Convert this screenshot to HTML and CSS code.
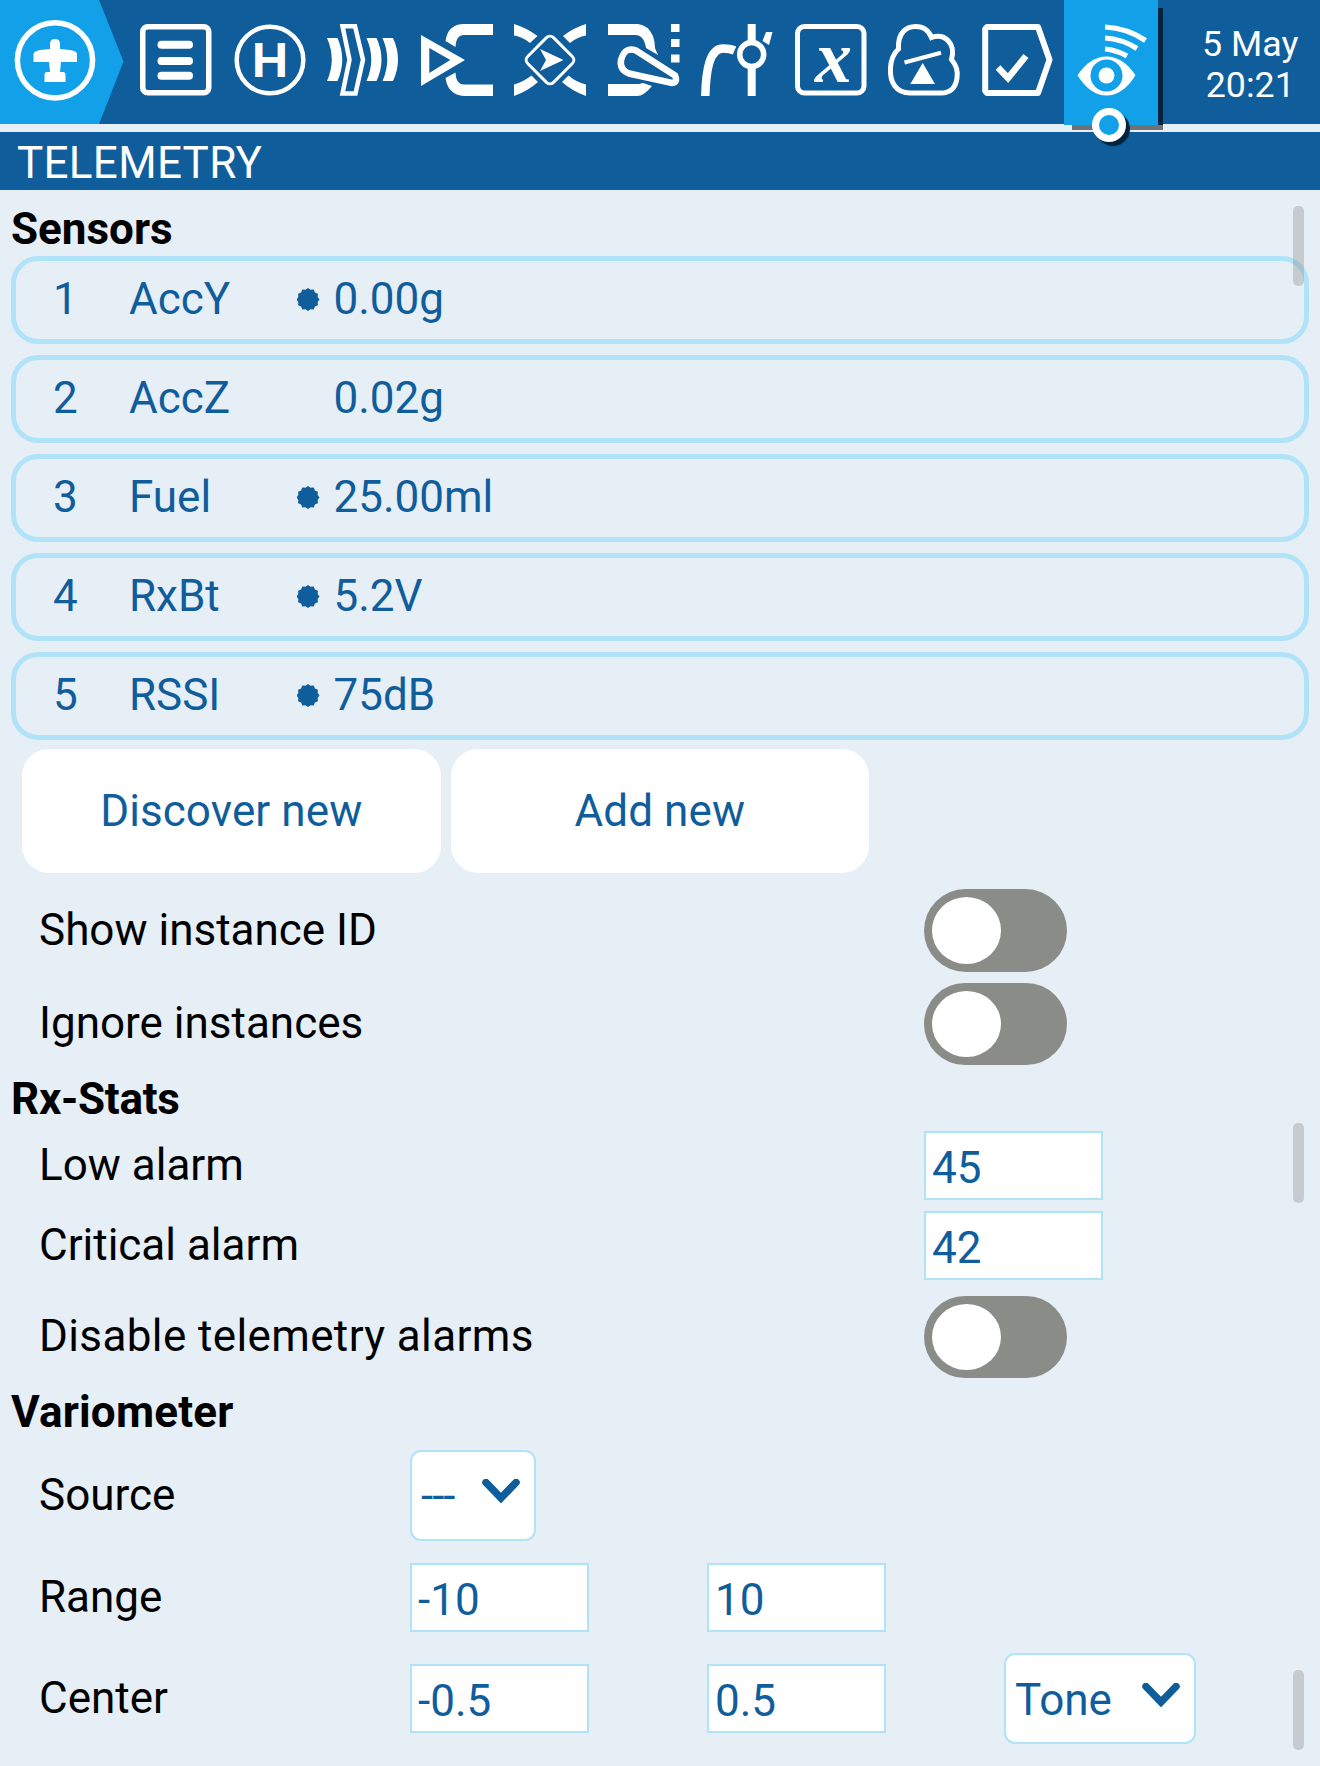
FILE: index.html
```html
<!DOCTYPE html>
<html lang="en">
<head>
<meta charset="utf-8">
<title>Telemetry</title>
<link rel="stylesheet" href="styles.css">
</head>
<body>
<header class="topbar">
  <div class="home">
    <svg width="124" height="124" viewBox="0 0 124 124">
      <path class="accent" d="M0 0H99L123.500 61.500L99 124H0Z"/>
      <circle class="line" cx="55" cy="60.300" r="37.600" stroke-width="5.500"/>
      <path class="solid" d="M50 44Q50 39 55 39Q60 39 60 44V49L70 50Q77 51 77 54V62H61L60 72H63Q65.500 72 65.500 75V82H44.500V75Q44.500 72 47 72H50L49 62H33.500V54Q34 51 40 50L50 49Z"/>
    </svg>
  </div>
  <nav class="tabs">
    <a class="tab"><svg class="icon" viewBox="0 0 72 72"><rect class="line" x="2.750" y="2.750" width="66" height="66" rx="5" stroke-width="5.500"/><path class="line" d="M21.500 20.700H49M21.500 37H49M21.500 51.700H49" stroke-width="8" stroke-linecap="round"/></svg></a>
    <a class="tab"><svg class="icon" viewBox="0 0 72 72"><circle class="line" cx="36" cy="36" r="33.300" stroke-width="4.500"/><text class="letter-h" x="18" y="53" textLength="36" lengthAdjust="spacingAndGlyphs">H</text></svg></a>
    <a class="tab"><svg class="icon" viewBox="0 0 72 72"><path class="solid" d="M0 14H10.500Q20 35.500 10.500 57H0Q9.500 35.500 0 14ZM39.500 14H49.500Q59.500 35.500 49.500 57H39.500Q49 35.500 39.500 14ZM55.500 14H66Q76 35.500 66 57H55.500Q65 35.500 55.500 14Z"/><path class="line" d="M15.500 2.200H28L36 35.700L28.500 69.500H15.500L22.500 35.700Z" stroke-width="4.500"/></svg></a>
    <a class="tab"><svg class="icon" viewBox="0 0 72 72"><path class="solid" fill-rule="evenodd" d="M0 11L44 36L0 62ZM8.300 24V49L29.300 36Z"/><path class="solid" d="M72 0H43Q27 0 24.500 17L34.500 23Q35 11 43 11H72ZM72 72H43Q27 71 24.500 54L34.500 48.500Q35 60.500 43 60.500H72Z"/></svg></a>
    <a class="tab"><svg class="icon" viewBox="0 0 72 72"><rect class="line" x="17.700" y="17.700" width="36.600" height="36.600" rx="5" stroke-width="3" transform="rotate(45 36 36)"/><path class="solid" d="M26 25L49.500 36L26 47L32 36Z"/><path class="solid" d="M0 0Q13 4 23.500 12L16 19Q9 13 0 11.500ZM72 0Q59 4 49 12L56 19Q63 13 72 11.500ZM0 72Q14 67 24 58L17.500 51.500Q10 57.500 0 60.500ZM72 72Q58 67 48 58L54.500 51.500Q62 58 72 60.500Z"/></svg></a>
    <a class="tab"><svg class="icon" viewBox="0 0 72 72"><path class="solid" d="M0 0H30Q40 1 45 12Q47 18 47 24L50 31L38 24Q36 11 27 11H0ZM0 60H31L35 59L44 62Q36 72 29 72H0Z"/><path class="line" d="M28 26.500L67 51.500Q70 58.500 64 59L21 49.500Q11.500 46 13 36Q17 22 28 26.500Z" stroke-width="6.500"/><path class="solid" d="M63 0H71.500V8H63ZM63 15H71.500V23H63ZM63 30.500H71.500V38.500H63Z"/></svg></a>
    <a class="tab"><svg class="icon" viewBox="0 0 72 72"><path class="line" d="M4.300 72C5 45 9 24.500 22 24.500Q29 24.500 33.500 26.500" stroke-width="8.500"/><path class="line" d="M50.700 0V72" stroke-width="8"/><circle class="ring" cx="50.700" cy="30.500" r="12" stroke-width="5.500"/><path class="solid" d="M65 8H71.500L68 21L61.500 17Z"/></svg></a>
    <a class="tab"><svg class="icon" viewBox="0 0 72 72"><rect class="line" x="2.500" y="2.500" width="66.500" height="66.500" rx="7" stroke-width="5"/><text class="letter-x" x="38.500" y="58" text-anchor="middle">x</text></svg></a>
    <a class="tab"><svg class="icon" viewBox="0 0 72 72"><path class="line" d="M10.500 25C9.500 9 18 2.500 27.500 2.500C36 2.500 41 7 43.500 13.500C57 8.500 68 20 63.500 35.500C69 42 70 48 69 54C67.500 65 61 69 53 69H22C8 69 1.500 58 2.500 44C3 34 6 29 10.500 25Z" stroke-width="5"/><path class="line" d="M16.500 38.500L53 28.700" stroke-width="4"/><path class="solid" d="M34.700 39L47 60H22.300Z"/></svg></a>
    <a class="tab"><svg class="icon" viewBox="0 0 72 72"><path class="line" d="M5 3H56L67.500 35.700L56 69H5L3.200 67V5Z" stroke-width="6" stroke-linejoin="round"/><path class="line" d="M16 43.500L26 54L44 32" stroke-width="6.500"/></svg></a>
    <a class="tab tab-active"><svg class="icon" viewBox="0 0 72 72"><path class="solid" d="M2.500 51.300Q15 32.500 31.500 32.500Q48 32.500 60.500 51.300Q48 71.500 31.500 71.500Q15 71.500 2.500 51.300Z"/><circle class="accent" cx="31.500" cy="51.500" r="16"/><circle class="solid" cx="31.500" cy="51.500" r="8"/><path class="line" d="M30 3Q52 4 70.500 16.500M30 14Q47 15 62 24.500M30 25Q41 26 52 32" stroke-width="5.200"/></svg><span class="marker"></span></a>
  </nav>
  <div class="clock"><div>5 May</div><div>20:21</div></div>
</header>
<h1 class="page-title">TELEMETRY</h1>
<main>
  <section class="panel sensors">
    <h2>Sensors</h2>
    <div class="sensor"><span>1</span><span>AccY</span><i class="dot"></i><span>0.00g</span></div>
    <div class="sensor"><span>2</span><span>AccZ</span><i></i><span>0.02g</span></div>
    <div class="sensor"><span>3</span><span>Fuel</span><i class="dot"></i><span>25.00ml</span></div>
    <div class="sensor"><span>4</span><span>RxBt</span><i class="dot"></i><span>5.2V</span></div>
    <div class="sensor"><span>5</span><span>RSSI</span><i class="dot"></i><span>75dB</span></div>
    <div class="buttons"><button>Discover new</button><button>Add new</button></div>
    <div class="row switch-row"><label>Show instance ID</label><span class="switch"></span></div>
    <div class="row switch-row"><label>Ignore instances</label><span class="switch"></span></div>
    <span class="scroll"></span>
  </section>
  <section class="panel stats">
    <h2>Rx-Stats</h2>
    <div class="row"><label>Low alarm</label><span class="field">45</span></div>
    <div class="row"><label>Critical alarm</label><span class="field">42</span></div>
    <div class="row switch-row"><label class="spaced">Disable telemetry alarms</label><span class="switch"></span></div>
    <span class="scroll"></span>
  </section>
  <section class="panel vario">
    <h2>Variometer</h2>
    <div class="row quad"><label>Source</label><span class="select select-source"><span class="dashes">---</span><svg class="chevron" viewBox="0 0 38 24"><path d="M4 3.500L19 19L34 3.500"/></svg></span></div>
    <div class="row quad"><label>Range</label><span class="field">-10</span><span class="field">10</span></div>
    <div class="row quad"><label>Center</label><span class="field">-0.5</span><span class="field">0.5</span><span class="select select-tone"><span>Tone</span><svg class="chevron" viewBox="0 0 38 24"><path d="M4 3.500L19 19L34 3.500"/></svg></span></div>
    <span class="scroll"></span>
  </section>
</main>
</body>
</html>
```
FILE: styles.css
```css
:root {
  --blue: #105d9c;
  --accent: #12a1e8;
  --bg: #e6eef6;
  --edge: #b0e2f8;
}
* { box-sizing: border-box; }
body {
  margin: 0;
  width: 1320px;
  height: 1766px;
  overflow: hidden;
  background: var(--bg);
  color: #000;
  font: 44px/52px Roboto, sans-serif;
}
.topbar {
  display: flex;
  height: 124px;
  margin-bottom: 8px;
  background: var(--blue);
}
.home { width: 129px; height: 124px; }
.home svg, .icon { display: block; }
.tabs { display: flex; }
.tab {
  display: flex;
  align-items: flex-start;
  width: 93.5px;
  padding: 24.4px 0 0 11px;
}
.icon { width: 72px; height: 72px; overflow: visible; }
.solid { fill: #fff; }
.accent { fill: var(--accent); }
.line { fill: none; stroke: #fff; }
.ring { fill: var(--blue); stroke: #fff; }
.letter-h { font: 700 47px Inter, sans-serif; fill: #fff; }
.letter-x { font: italic 700 74px "Liberation Serif", serif; fill: #fff; }
.tab-active {
  position: relative;
  height: 125px;
  background: var(--accent);
}
/* hard drop shadow along the right and bottom edges */
.tab-active::before {
  content: "";
  position: absolute;
  left: 93.5px;
  top: 8px;
  width: 5px;
  height: 117px;
  background: #03233d;
}
.tab-active::after {
  content: "";
  position: absolute;
  left: 8px;
  top: 125px;
  width: 90.5px;
  height: 5px;
  background: #707375;
}
.marker {
  position: absolute;
  z-index: 1;
  left: 28px;
  top: 108px;
  width: 34px;
  height: 34px;
  border: 7px solid #fff;
  border-radius: 50%;
  background: var(--accent);
  box-shadow: 4px 4px 1px #03233d;
}
.clock {
  flex: 1;
  padding: 23.5px 0 0 23px;
  text-align: center;
  color: #fff;
  font-size: 35.75px;
  line-height: 41.25px;
}
.page-title {
  height: 58px;
  margin: 0;
  padding-left: 17px;
  background: var(--blue);
  color: #fff;
  font-size: 44px;
  font-weight: 400;
  letter-spacing: .3px;
  line-height: 63px;
}
.panel { position: relative; padding: 0 11px; }
h2 { margin: 0; font-size: 44px; font-weight: 700; }
.sensors { height: 880.5px; }
.sensors h2 { height: 66px; line-height: 78px; }
.sensor {
  display: grid;
  grid-template-columns: 76px 155px 49.5px 1fr;
  align-items: center;
  height: 88px;
  margin-bottom: 11px;
  padding: 0 0 3px 37px;
  border: 5.5px solid var(--edge);
  border-radius: 27px;
  color: var(--blue);
}
/* status dot with a scalloped edge */
.dot {
  width: 23px;
  height: 23px;
  margin: 2px 0 0 12.5px;
  background: var(--blue);
  clip-path: polygon(50% 0, 61% 8%, 75% 7%, 80% 20%, 93% 25%, 92% 39%, 100% 50%, 92% 61%, 93% 75%, 80% 80%, 75% 93%, 61% 92%, 50% 100%, 39% 92%, 25% 93%, 20% 80%, 7% 75%, 8% 61%, 0 50%, 8% 39%, 7% 25%, 20% 20%, 25% 7%, 39% 8%);
}
.buttons { display: flex; gap: 10px; margin: -2.5px 0 11px 11px; }
button {
  width: 418.5px;
  height: 124px;
  padding: 0;
  border: 0;
  border-radius: 27px;
  background: #fff;
  color: var(--blue);
  font: inherit;
  letter-spacing: .1px;
}
.row {
  display: grid;
  grid-template-columns: 885px 1fr;
  align-items: center;
  height: 79.8px;
  padding-left: 28px;
}
.switch-row { height: 93.5px; }
.row label { margin-top: -1px; }
.row .spaced { letter-spacing: .38px; }
.switch {
  width: 143px;
  height: 82.5px;
  padding: 8px;
  border-radius: 42px;
  background: #8a8c88;
}
.switch::before {
  content: "";
  display: block;
  width: 69px;
  height: 66.5px;
  border-radius: 50%;
  background: #fff;
}
.field {
  width: 178.5px;
  height: 69px;
  padding: 5px 0 0 6px;
  border: 2.75px solid var(--edge);
  background: #fff;
  color: var(--blue);
  line-height: 60px;
}
.stats { height: 313px; }
.stats h2 { height: 55px; line-height: 57px; letter-spacing: -.3px; }
.stats .switch-row { margin-top: 5px; }
.vario h2 { height: 61px; line-height: 57px; letter-spacing: .2px; }
.vario .row { height: 101.7px; }
.quad { grid-template-columns: 371px 297px 297px 1fr; }
.select {
  display: flex;
  justify-content: space-between;
  align-items: center;
  height: 91px;
  padding: 2px 14px 0 9px;
  border: 2.75px solid var(--edge);
  border-radius: 11px;
  background: #fff;
  color: var(--blue);
}
.select-source { width: 126px; }
.select-tone { width: 192px; }
.dashes { letter-spacing: -1px; }
.chevron { width: 38px; height: 24px; margin-top: -10px; }
.chevron path { fill: none; stroke: var(--blue); stroke-width: 7.5; stroke-linecap: round; }
.scroll {
  position: absolute;
  right: 16.5px;
  width: 11px;
  border-radius: 5px;
  background: rgba(138, 140, 136, .36);
}
.sensors .scroll { top: 16px; height: 80px; }
.stats .scroll { top: 52px; height: 80px; }
.vario .scroll { top: 286px; height: 80px; }
```
